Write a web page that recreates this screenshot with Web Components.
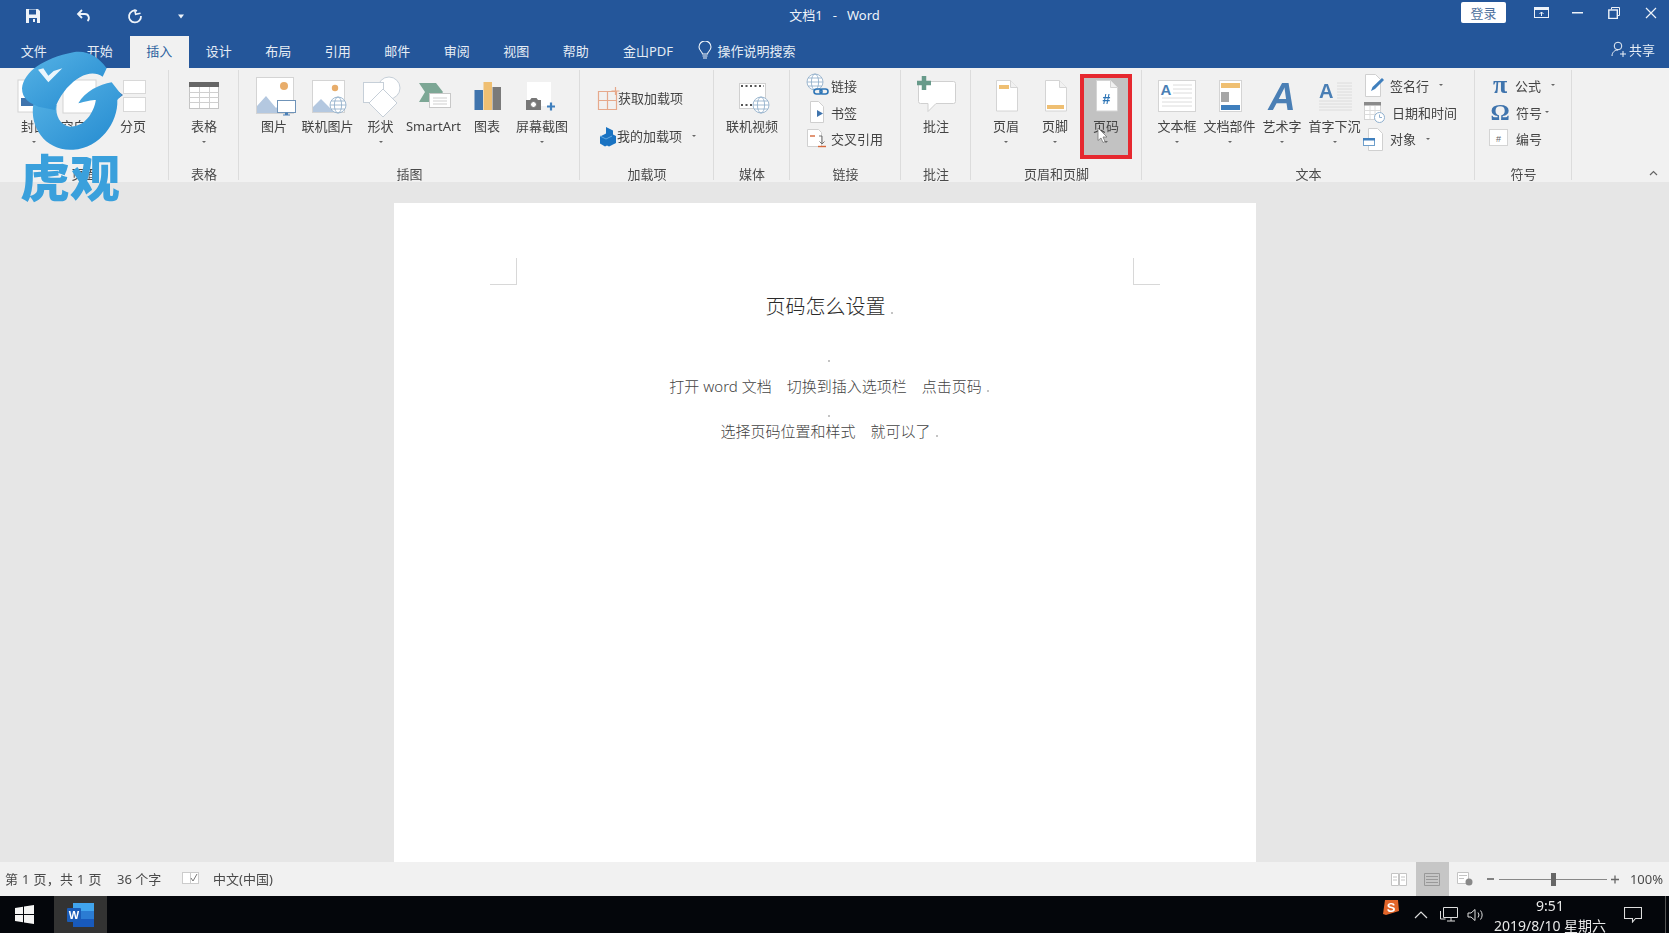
<!DOCTYPE html>
<html lang="zh">
<head>
<meta charset="utf-8">
<title>文档1 - Word</title>
<style>
  html, body { margin: 0; height: 100%; overflow: hidden; }
  body { font-family: "Noto Sans", "Noto Sans CJK SC", sans-serif; }
</style>
</head>
<body>
<word-window>
  <title-bar></title-bar>
  <tab-bar></tab-bar>
  <ribbon-bar>
    <ribbon-group label="页面" width="169" pad="8">
      <big-button icon="cover" label="封面" caret width="52"></big-button>
      <big-button icon="blank" label="空白页" width="40"></big-button>
      <big-button icon="pagebreak" label="分页" width="66"></big-button>
    </ribbon-group>
    <ribbon-group label="表格" width="70">
      <big-button icon="table" label="表格" caret width="70"></big-button>
    </ribbon-group>
    <ribbon-group label="插图" width="341" pad="8">
      <big-button icon="picture" label="图片" width="54"></big-button>
      <big-button icon="online" label="联机图片" width="53"></big-button>
      <big-button icon="shapes" label="形状" caret width="53"></big-button>
      <big-button icon="smartart" label="SmartArt" width="53"></big-button>
      <big-button icon="chart" label="图表" width="54"></big-button>
      <big-button icon="screenshot" label="屏幕截图" caret width="56"></big-button>
    </ribbon-group>
    <ribbon-group label="加载项" width="134" pad="15">
      <small-stack rows="38.5" top="10">
        <small-button icon="getaddin" label="获取加载项" box="23"></small-button>
        <small-button icon="myaddin" label="我的加载项" box="22" caret></small-button>
      </small-stack>
    </ribbon-group>
    <ribbon-group label="媒体" width="76">
      <big-button icon="video" label="联机视频" width="76"></big-button>
    </ribbon-group>
    <ribbon-group label="链接" width="111" pad="15">
      <small-stack rows="26.8" top="4">
        <small-button icon="link" label="链接" box="26"></small-button>
        <small-button icon="bookmark" label="书签" box="26"></small-button>
        <small-button icon="crossref" label="交叉引用" box="26"></small-button>
      </small-stack>
    </ribbon-group>
    <ribbon-group label="批注" width="70">
      <big-button icon="comment" label="批注" width="70"></big-button>
    </ribbon-group>
    <ribbon-group label="页眉和页脚" width="171" pad="11">
      <big-button icon="header" label="页眉" caret width="48"></big-button>
      <big-button icon="footer" label="页脚" caret width="50"></big-button>
      <big-button icon="pagenum" label="页码" caret width="52" active></big-button>
    </ribbon-group>
    <ribbon-group label="文本" width="333" pad="10">
      <big-button icon="textbox" label="文本框" caret width="50"></big-button>
      <big-button icon="parts" label="文档部件" caret width="55"></big-button>
      <big-button icon="wordart" label="艺术字" caret width="50"></big-button>
      <big-button icon="dropcap" label="首字下沉" caret width="55"></big-button>
      <small-stack rows="26.8" top="4">
        <small-button icon="signature" label="签名行" box="28" caret></small-button>
        <small-button icon="datetime" label="日期和时间" box="30"></small-button>
        <small-button icon="object" label="对象" box="28" caret></small-button>
      </small-stack>
    </ribbon-group>
    <ribbon-group label="符号" width="97" pad="12">
      <small-stack rows="26.8" top="4">
        <small-button glyph="π" size="26" label="公式" box="28" caret></small-button>
        <small-button glyph="Ω" size="24" label="符号" box="29" caret="3"></small-button>
        <small-button icon="number" label="编号" box="29"></small-button>
      </small-stack>
    </ribbon-group>
  </ribbon-bar>
  <doc-area></doc-area>
  <status-bar></status-bar>
  <task-bar></task-bar>
  <logo-mark></logo-mark>
</word-window>

<script>
const pageShape = (extra) => `<path d="M14.5 6.5h14l7 7v23.500h-21z" fill="#fff" stroke="#d4d4d4"/><path d="M28.500 6.500v7h7" fill="#f1f1f1" stroke="#d4d4d4"/>${extra}`;

const globe = (cx, cy, r) => `<g fill="#fff" stroke="#8aa9c6" stroke-width=".8"><circle cx="${cx}" cy="${cy}" r="${r}"/><ellipse cx="${cx}" cy="${cy}" rx="${r * 0.45}" ry="${r}" fill="none"/><path d="M${cx - r} ${cy}h${r * 2}M${cx - r * 0.85} ${cy - r * 0.5}h${r * 1.7}M${cx - r * 0.85} ${cy + r * 0.5}h${r * 1.7}" fill="none"/></g>`;

const BIG_ICONS = {
  cover: `<rect x="8" y="6" width="26" height="32" fill="#fff" stroke="#d4d4d4"/><rect x="11" y="24" width="20" height="8" fill="#3f74ad"/>`,
  blank: `<rect x="7" y="6" width="33" height="33" fill="#fff" stroke="#d4d4d4"/>`,
  pagebreak: `<rect x="14.500" y="6.500" width="22" height="13" fill="#fff" stroke="#d8d8d8"/><rect x="14.500" y="23.500" width="22" height="14" fill="#fff" stroke="#d8d8d8"/><path d="M10 18l4 3-4 3z" fill="#3f74ad"/>`,
  table: `<rect x="9.500" y="8.500" width="29" height="26" fill="#fff" stroke="#c4c4c4"/><rect x="9" y="8" width="30" height="5" fill="#666"/><path d="M9.500 18.500h29M9.500 23.500h29M9.500 28.500h29M19.500 13v21M29.500 13v21" stroke="#cfcfcf" fill="none"/>`,
  picture: `<rect x="6.500" y="3.500" width="37" height="36" fill="#fff" stroke="#d4d4d4"/><circle cx="34" cy="12" r="4" fill="#e8ad6b"/><path d="M7 39v-7l9-10 10 12 3-3 8 8z" fill="#b4c8e0"/><rect x="27.500" y="26.500" width="18" height="12" fill="#fff" stroke="#6f93b8"/><path d="M35 38.500h3v2h2v1h-7v-1h2z" fill="#4a7fb5"/>`,
  online: `<rect x="8.500" y="6.500" width="32" height="32" fill="#fff" stroke="#d4d4d4"/><circle cx="31" cy="14" r="3.200" fill="#e8ad6b"/><path d="M9 38v-5l8-8 9 9 4 4z" fill="#b4c8e0"/>${globe(34, 31, 8)}`,
  shapes: `<circle cx="32" cy="14" r="11" fill="#fff" stroke="#c6cfd8"/><rect x="6.500" y="8.500" width="20" height="20" fill="#fff" stroke="#c6cfd8"/><path d="M26 15l14 14-14 14-14-14z" fill="#fff" stroke="#c6cfd8"/>`,
  smartart: `<path d="M9 9h17l7 9-7 10H9l6-10z" fill="#7da795"/><rect x="19.500" y="19.500" width="21" height="14" fill="#fff" stroke="#c8c8c8"/><path d="M23 24h14M23 27h14M23 30h14" stroke="#cfcfcf" fill="none"/>`,
  chart: `<rect x="11.500" y="16" width="8.500" height="20" fill="#3f74ad"/><rect x="20.500" y="8" width="8.500" height="28" fill="#efbf72"/><rect x="29.500" y="13" width="8.500" height="23" fill="#7a7a7a"/>`,
  screenshot: `<rect x="9" y="8" width="24" height="24" fill="#fff"/><path d="M8 26h4l1.500-2h5l1.500 2h3v10H8z" fill="#777"/><circle cx="15.500" cy="30.500" r="3" fill="#fff" stroke="#777"/><path d="M33 28.500v8M29 32.500h8" stroke="#3f7fbd" stroke-width="2.200" fill="none"/>`,
  video: `<rect x="11.500" y="9.500" width="26" height="25" fill="#fff" stroke="#d0d0d0"/><path d="M13 12h23M13 31h14" stroke="#555" stroke-width="1.800" stroke-dasharray="2 2.500" fill="none"/>${globe(33, 31, 8)}`,
  comment: `<path d="M8.500 7.500h33q2 0 2 2v18q0 2-2 2H24l-8 8v-8H8.500q-2 0-2-2v-18q0-2 2-2z" fill="#fff" stroke="#d0d0d0"/><path d="M12 2v14M5 9h14" stroke="#679a8a" stroke-width="4.500" fill="none"/>`,
  header: pageShape(`<rect x="17" y="11" width="10" height="4" fill="#efbf72"/>`),
  footer: pageShape(`<rect x="16" y="31" width="17" height="4" fill="#efbf72"/>`),
  pagenum: pageShape(`<text x="24.500" y="30" text-anchor="middle" font-family="Liberation Sans" font-weight="700" font-size="14" fill="#2e75b6">#</text>`),
  textbox: `<rect x="5.500" y="6.500" width="37" height="31" fill="#fff" stroke="#d4d4d4"/><text x="7.500" y="21" font-family="Liberation Sans" font-weight="700" font-size="15" fill="#4a7fb5">A</text><path d="M20 11h19M20 15h19M20 19h19M9 24h30M9 28h30M9 32h30" stroke="#dcdcdc" fill="none"/>`,
  parts: `<rect x="13.500" y="6.500" width="22" height="31" fill="#fff" stroke="#d4d4d4"/><rect x="15" y="9" width="19" height="5" fill="#efbf72"/><rect x="15" y="18" width="8" height="10" fill="#a6a6a6"/><rect x="15" y="31" width="19" height="5" fill="#3f7fbd"/>`,
  wordart: `<text x="24" y="36" text-anchor="middle" font-family="Liberation Sans" font-weight="700" font-style="italic" font-size="38" fill="#4a7fb5">A</text>`,
  dropcap: `<path d="M26 9h15M26 12h15M26 15h15M26 18h15M26 21h15M26 24h15M8 27h33M8 30h33M8 33h33M8 36h33" stroke="#dcdcdc" fill="none"/><text x="8" y="24" font-family="Liberation Sans" font-weight="700" font-size="20" fill="#4a7fb5">A</text>`
};

const SMALL_ICONS = {
  getaddin: `<path d="M3.500 7.500h18v18h-18zM12.500 7.500v18M3.500 16.500h18" fill="none" stroke="#e6a98c" stroke-width="1.200"/><path d="M20.500 3v8M16.500 7h8" stroke="#e6a98c" stroke-width="1.200" fill="none"/>`,
  myaddin: `<path d="M11 4l7 3.500v4l3 1.500v7l-7 3.500-2-1-2 1-5-3v-7l6-3z" fill="#1a73c2"/><path d="M5 13l6 3 6-3" stroke="#62a7e0" fill="none"/>`,
  link: `${globe(10, 10, 8)}<rect x="9" y="17" width="8" height="5" rx="2.500" fill="none" stroke="#2e75b6" stroke-width="1.600"/><rect x="15" y="17" width="8" height="5" rx="2.500" fill="none" stroke="#2e75b6" stroke-width="1.600"/>`,
  bookmark: `<path d="M5.500 2.500h8l5 5v16h-13z" fill="#fff" stroke="#cfcfcf"/><path d="M12 11l6 3.500-6 3.500z" fill="#3f74ad"/>`,
  crossref: `<path d="M2.500 3.500h11l3 3v14h-14z" fill="#fff" stroke="#d0d0d0"/><path d="M5 10h5" stroke="#d6683a" stroke-width="1.400" fill="none"/><path d="M14 10h3v7M14.500 15.500l2.500 2.500 2.500-2.500" stroke="#666" stroke-width=".9" fill="none"/><path d="M13 20.500h8" stroke="#d6683a" stroke-width="1.400" fill="none"/>`,
  signature: `<path d="M3.500 2.500h10l5 5v17h-15z" fill="#fff" stroke="#d0d0d0"/><path d="M9 19l1.500-4L20 6l2 2-9 9z" fill="#3f7fbd"/>`,
  datetime: `<rect x="2.500" y="3.500" width="16" height="17" fill="#fff" stroke="#d4d4d4"/><rect x="2" y="3" width="17" height="3.500" fill="#8a8a8a"/><path d="M2.500 11.500h16M2.500 15.500h16M8 7v13M13 7v13" stroke="#dcdcdc" fill="none"/><circle cx="17.500" cy="18.500" r="5" fill="#fff" stroke="#8fb0cf"/><path d="M17.500 15.500v3h2.500" stroke="#8fb0cf" fill="none"/>`,
  object: `<path d="M6.500 2.500h9l5 5v17h-14z" fill="#fff" stroke="#d0d0d0"/><rect x="1.500" y="12.500" width="11" height="7" fill="#fff" stroke="#6f9fcb"/><rect x="1" y="12" width="12" height="2.500" fill="#3f7fbd"/>`,
  number: `<rect x="2.500" y="3.500" width="18" height="16" fill="#fff" stroke="#d4d4d4"/><text x="11.500" y="16" text-anchor="middle" font-family="Liberation Sans" font-size="9" fill="#666">#</text>`
};

class WordWindow extends HTMLElement {
  constructor() {
    super();
    this.attachShadow({ mode: "open" });
    this.shadowRoot.innerHTML = `
      <style>
        :host {
          display: grid;
          grid-template-rows: 34px 34px 114px 680px 34px 37px;
          position: relative;
          width: 1669px;
          height: 933px;
          overflow: hidden;
          font-family: "Noto Sans", "Noto Sans CJK SC", sans-serif;
          filter: blur(.35px);
        }
      </style>
      <slot></slot>
    `;
  }
}

class TitleBar extends HTMLElement {
  constructor() {
    super();
    this.attachShadow({ mode: "open" });
    this.shadowRoot.innerHTML = `
      <style>
        :host {
          display: grid;
          grid-template-columns: 1fr auto 1fr;
          align-items: center;
          box-sizing: border-box;
          padding-bottom: 2px;
          background: #24569a;
          color: #eef3f9;
          font-size: 13px;
        }
        .qat { display: flex; padding-left: 7px; }
        .qat span { width: 51px; display: flex; justify-content: center; align-items: center; }
        .qat span:last-child { width: 41px; }
        .qat svg { display: block; }
        .title { white-space: pre; margin-bottom: 4px; }
        .ctl { display: flex; justify-content: flex-end; align-items: center; margin-top: 2px; }
        .login {
          width: 45px;
          height: 21px;
          margin-right: 17px;
          margin-top: -9px;
          background: #fff;
          color: #4d6f9c;
          border-radius: 2px;
          display: flex;
          align-items: center;
          justify-content: center;
        }
        .win { width: 36.500px; height: 26px; margin-top: -9px; display: flex; align-items: center; justify-content: center; }
      </style>
      <div class="qat">
        <span><svg width="16" height="16" viewBox="0 0 16 16"><path d="M1 1h12l2 2v12H1z" fill="#eef3f9"/><rect x="4" y="1.500" width="7" height="5" fill="#24569a"/><rect x="4" y="10" width="8" height="5" fill="#24569a"/><rect x="8" y="11" width="2" height="3" fill="#eef3f9"/></svg></span>
        <span><svg width="16" height="16" viewBox="0 0 16 16"><path d="M6 2L2 6l4 4M2.500 6H9a4 4 0 0 1 2.500 7" fill="none" stroke="#eef3f9" stroke-width="1.800"/></svg></span>
        <span><svg width="16" height="16" viewBox="0 0 16 16"><path d="M10 2.800A6 6 0 1 0 14 8" fill="none" stroke="#eef3f9" stroke-width="1.800"/><path d="M8 1v5h5" fill="none" stroke="#eef3f9" stroke-width="1.600" transform="rotate(-12 10 3)"/></svg></span>
        <span><svg width="8" height="8" viewBox="0 0 8 8"><path d="M1 2.500h6L4 6.500z" fill="#eef3f9"/></svg></span>
      </div>
      <div class="title">文档1   -   Word</div>
      <div class="ctl">
        <div class="login">登录</div>
        <div class="win"><svg width="15" height="12" viewBox="0 0 15 12"><rect x=".5" y=".5" width="14" height="10" fill="none" stroke="#eef3f9"/><rect x="1" y="1" width="13" height="2" fill="#eef3f9"/><path d="M7.500 9V5M5.500 7l2-2 2 2" stroke="#eef3f9" fill="none"/></svg></div>
        <div class="win"><svg width="11" height="2" viewBox="0 0 11 2"><rect width="11" height="1.500" fill="#eef3f9"/></svg></div>
        <div class="win"><svg width="12" height="12" viewBox="0 0 12 12"><path d="M3.500 2.500v-2h8v8h-2" fill="none" stroke="#eef3f9"/><rect x=".8" y="3" width="8.500" height="8.500" fill="none" stroke="#eef3f9" stroke-width="1.400"/></svg></div>
        <div class="win" style="margin-right: 0"><svg width="12" height="12" viewBox="0 0 12 12"><path d="M1 1l10 10M11 1L1 11" stroke="#eef3f9" stroke-width="1.200"/></svg></div>
      </div>
    `;
  }
}

class TabBar extends HTMLElement {
  constructor() {
    super();
    this.attachShadow({ mode: "open" });
    const tabs = ["文件", "开始", "插入", "设计", "布局", "引用", "邮件", "审阅", "视图", "帮助"];
    this.shadowRoot.innerHTML = `
      <style>
        :host {
          display: flex;
          align-items: stretch;
          background: #24569a;
          color: #e6edf5;
          font-size: 13px;
          padding: 2px 0 0 4px;
          box-sizing: border-box;
        }
        .tab { width: 59.500px; display: flex; align-items: center; justify-content: center; padding-bottom: 3px; box-sizing: border-box; }
        .tab:first-of-type { margin-right: 6.500px; }
        .tab.active { background: #f1f1f1; color: #2b5f9e; }
        .pdf { width: 85px; }
        .search { display: flex; align-items: center; gap: 6px; margin-left: 7px; padding-bottom: 3px; }
        .share { margin-left: auto; display: flex; align-items: center; gap: 2px; padding: 0 14px 6px 0; }
      </style>
      ${tabs
        .map((t) => `<div class="tab${t === "插入" ? " active" : ""}">${t}</div>`)
        .join("")}
      <div class="tab pdf">金山PDF</div>
      <div class="search">
        <svg width="14" height="19" viewBox="0 0 14 19"><path d="M4.500 13c0-2-3.500-3.500-3.500-7a6 6 0 0 1 12 0c0 3.500-3.500 5-3.500 7z" fill="none" stroke="#eef3f9" stroke-width="1.100"/><path d="M4.500 15h5M5 17h4" stroke="#eef3f9"/></svg>
        <span>操作说明搜索</span>
      </div>
      <div class="share">
        <svg width="16" height="17" viewBox="0 0 16 17"><circle cx="7" cy="5" r="3.800" fill="none" stroke="#eef3f9"/><path d="M1 15c0-3.500 2.500-6 6-6" fill="none" stroke="#eef3f9"/><path d="M12 10v6M9 13h6" stroke="#eef3f9"/></svg>
        <span>共享</span>
      </div>
    `;
  }
}

class RibbonBar extends HTMLElement {
  constructor() {
    super();
    this.attachShadow({ mode: "open" });
    this.shadowRoot.innerHTML = `
      <style>
        :host {
          display: flex;
          position: relative;
          background: #f1f1f1;
          color: #444;
          font-size: 13px;
        }
        .collapse { position: absolute; right: 11px; bottom: 6px; }
      </style>
      <slot></slot>
      <svg class="collapse" width="9" height="6" viewBox="0 0 9 6"><path d="M1 5l3.500-3.500L8 5" fill="none" stroke="#666" stroke-width="1.200"/></svg>
    `;
  }
}

class RibbonGroup extends HTMLElement {
  constructor() {
    super();
    this.attachShadow({ mode: "open" });
  }

  connectedCallback() {
    this.shadowRoot.innerHTML = `
      <style>
        :host {
          display: flex;
          flex-direction: column;
          flex: none;
          box-sizing: border-box;
          width: ${this.getAttribute("width")}px;
          position: relative;
        }
        :host::after {
          content: "";
          position: absolute;
          right: 0;
          top: 2px;
          bottom: 2px;
          width: 1px;
          background: #dcdcdc;
        }
        .items { flex: 1; display: flex; padding-left: ${this.getAttribute("pad") || 0}px; }
        .label { height: 18px; line-height: 20px; text-align: center; color: #4a4a4a; }
      </style>
      <div class="items"><slot></slot></div>
      <div class="label">${this.getAttribute("label")}</div>
    `;
  }
}

class BigButton extends HTMLElement {
  constructor() {
    super();
    this.attachShadow({ mode: "open" });
  }

  connectedCallback() {
    const active = this.hasAttribute("active");
    this.shadowRoot.innerHTML = `
      <style>
        :host {
          display: flex;
          flex-direction: column;
          align-items: center;
          flex: none;
          box-sizing: border-box;
          position: relative;
          width: ${this.getAttribute("width")}px;
          padding-top: 6px;
          height: 96px;
          white-space: nowrap;
        }
        .hot {
          position: absolute;
          left: 0;
          right: 0;
          top: 6px;
          height: 85px;
          box-sizing: border-box;
          background: #c2c2c2;
          border: 4px solid #e6282f;
        }
        svg.icon { position: relative; display: block; }
        .label { position: relative; height: 16px; line-height: 16px; color: #444; }
        .caret {
          position: relative;
          width: 0;
          height: 0;
          margin-top: 7px;
          border: 2px solid transparent;
          border-top: 2.500px solid #666;
          border-bottom: 0;
        }
        .cursor { position: absolute; left: 17px; top: 59px; }
      </style>
      ${active ? '<div class="hot"></div>' : ""}
      <svg class="icon" width="48" height="44" viewBox="0 0 48 44">${BIG_ICONS[this.getAttribute("icon")]}</svg>
      <div class="label">${this.getAttribute("label")}</div>
      ${this.hasAttribute("caret") ? '<div class="caret"></div>' : ""}
      ${
        active
          ? `<svg class="cursor" width="13" height="17" viewBox="0 0 13 17"><path d="M1 1v12.500l3-2.500 2 4.500 2-1-2-4.500h4z" fill="#fff" stroke="#777" stroke-width=".8"/></svg>`
          : ""
      }
    `;
  }
}

class SmallStack extends HTMLElement {
  constructor() {
    super();
    this.attachShadow({ mode: "open" });
  }

  connectedCallback() {
    this.shadowRoot.innerHTML = `
      <style>
        :host {
          display: grid;
          grid-auto-rows: ${this.getAttribute("rows")}px;
          align-content: start;
          padding-top: ${this.getAttribute("top")}px;
        }
      </style>
      <slot></slot>
    `;
  }
}

class SmallButton extends HTMLElement {
  constructor() {
    super();
    this.attachShadow({ mode: "open" });
  }

  connectedCallback() {
    const caret = this.getAttribute("caret");
    const glyph = this.getAttribute("glyph");
    this.shadowRoot.innerHTML = `
      <style>
        :host {
          display: flex;
          align-items: center;
          white-space: nowrap;
          color: #444;
        }
        .box { width: ${this.getAttribute("box")}px; flex: none; display: flex; align-items: center; justify-content: flex-start; }
        svg { display: block; flex: none; }
        .glyph {
          width: 26px;
          text-align: center;
          font-family: "Liberation Serif", serif;
          font-weight: 700;
          font-size: ${this.getAttribute("size")}px;
          line-height: 26px;
          color: #3f74ad;
        }
        .caret {
          width: 0;
          height: 0;
          margin-left: ${caret ? caret : 10}px;
          border: 2px solid transparent;
          border-top: 2.500px solid #666;
          border-bottom: 0;
        }
      </style>
      <div class="box">${
        glyph
          ? `<span class="glyph">${glyph}</span>`
          : `<svg width="26" height="26" viewBox="0 0 26 26">${SMALL_ICONS[this.getAttribute("icon")]}</svg>`
      }</div>
      <span>${this.getAttribute("label")}</span>
      ${caret !== null ? '<div class="caret"></div>' : ""}
    `;
  }
}

class DocArea extends HTMLElement {
  constructor() {
    super();
    this.attachShadow({ mode: "open" });
    this.shadowRoot.innerHTML = `
      <style>
        :host {
          display: flex;
          justify-content: center;
          align-items: flex-start;
          background: #e6e6e6;
          padding: 21px 19px 0 0;
          overflow: hidden;
          box-sizing: border-box;
        }
        .page {
          position: relative;
          box-sizing: border-box;
          width: 862px;
          height: 659px;
          background: #fff;
          padding: 91px 0 0 8px;
          text-align: center;
          color: #444;
          font-weight: 300;
          font-size: 15px;
        }
        .crop { position: absolute; top: 55px; width: 26px; height: 26px; border-bottom: 1px solid #d8d8d8; }
        .crop.l { left: 96px; border-right: 1px solid #d8d8d8; }
        .crop.r { left: 739px; border-left: 1px solid #d8d8d8; }
        p { margin: 0; line-height: 20px; white-space: pre; }
        .h1 { font-size: 20px; line-height: 26px; color: #2a2a2a; }
        .mark { display: inline-block; width: 2px; height: 2px; margin-left: 5px; background: #c4c4c4; vertical-align: baseline; }
        .empty .mark { margin: 0; }
      </style>
      <div class="page">
        <div class="crop l"></div>
        <div class="crop r"></div>
        <p class="h1">页码怎么设置<span class="mark"></span></p>
        <p class="empty" style="margin-top: 26px"><span class="mark"></span></p>
        <p style="margin-top: 10px">打开 word 文档&emsp;切换到插入选项栏&emsp;点击页码<span class="mark"></span></p>
        <p class="empty" style="margin-top: 5px"><span class="mark"></span></p>
        <p>选择页码位置和样式&emsp;就可以了<span class="mark"></span></p>
      </div>
    `;
  }
}

class StatusBar extends HTMLElement {
  constructor() {
    super();
    this.attachShadow({ mode: "open" });
    this.shadowRoot.innerHTML = `
      <style>
        :host {
          display: flex;
          align-items: stretch;
          background: #f1f1f1;
          color: #4a4a4a;
          font-size: 13px;
          white-space: pre;
        }
        .item { display: flex; align-items: center; padding-bottom: 1px; }
        .view { width: 33px; display: flex; align-items: center; justify-content: center; }
        .view.on { background: #c6c6c6; }
        .zoom { display: flex; align-items: center; gap: 0; }
        .track { position: relative; width: 108px; height: 1px; background: #888; margin: 0 4px; }
        .thumb { position: absolute; left: 52px; top: -6px; width: 5px; height: 13px; background: #666; }
      </style>
      <div class="item" style="margin-left: 5px; width: 112px; letter-spacing: .3px">第 1 页，共 1 页</div>
      <div class="item" style="width: 65px">36 个字</div>
      <div class="item" style="width: 31px"><svg width="17" height="13" viewBox="0 0 17 13"><rect x=".5" y=".5" width="8" height="11" fill="#fff" stroke="#ccc"/><rect x="8.500" y=".5" width="8" height="11" fill="#fff" stroke="#ccc"/><path d="M9 6l2 3 4-7" fill="none" stroke="#777"/></svg></div>
      <div class="item">中文(中国)</div>
      <div style="flex: 1"></div>
      <div class="view"><svg width="16" height="13" viewBox="0 0 16 13"><path d="M.5.5h7v12h-7zM8.500.5h7v12h-7zM2 4h4M2 7h4M10 4h4M10 7h4" fill="#fff" stroke="#c4c4c4"/></svg></div>
      <div class="view on"><svg width="16" height="13" viewBox="0 0 16 13"><path d="M.5.5h15v12H.5zM2 3.500h12M2 6.500h12M2 9.500h12" fill="none" stroke="#999"/></svg></div>
      <div class="view"><svg width="16" height="14" viewBox="0 0 16 14"><path d="M.5.5h11v11H.5zM2 3.500h8M2 6.500h5" fill="#fff" stroke="#c4c4c4"/><circle cx="12" cy="10" r="3.500" fill="#888"/></svg></div>
      <div class="zoom" style="margin-left: 5px">
        <svg width="8" height="8" viewBox="0 0 8 8"><path d="M0 4h7" stroke="#666" stroke-width="1.600"/></svg>
        <div class="track"><div class="thumb"></div></div>
        <svg width="9" height="9" viewBox="0 0 9 9"><path d="M0 4.500h8M4 .5v8" stroke="#666" stroke-width="1.300"/></svg>
      </div>
      <div class="item" style="margin-left: 10px; margin-right: 6px">100%</div>
    `;
  }
}

class TaskBar extends HTMLElement {
  constructor() {
    super();
    this.attachShadow({ mode: "open" });
    this.shadowRoot.innerHTML = `
      <style>
        :host {
          display: flex;
          align-items: stretch;
          background: #04060b;
          color: #e8e8e8;
          font-size: 14px;
        }
        .start { width: 54px; display: flex; align-items: center; justify-content: center; padding-right: 6px; box-sizing: border-box; }
        .word { width: 53px; background: #333; display: flex; align-items: center; justify-content: center; }
        .tray { margin-left: auto; display: flex; align-items: center; position: relative; padding-right: 27px; }
        .tray > svg { display: block; }
        .sogou { position: absolute; left: -32px; top: 3px; }
        .clock { width: 112px; height: 37px; margin-left: 9px; display: flex; flex-direction: column; align-items: center; line-height: 20px; white-space: nowrap; }
        .edge { position: absolute; right: 3px; top: 0; bottom: 0; width: 1px; background: #555; }
      </style>
      <div class="start">
        <svg width="19" height="19" viewBox="0 0 19 19"><path d="M0 3l8-1.200v7.200H0zM9 1.600L19 0v9H9zM0 10h8v7.200L0 16zM9 10h10v9L9 17.400z" fill="#f4f4f4"/></svg>
      </div>
      <div class="word">
        <svg width="27" height="24" viewBox="0 0 27 24"><rect x="6" y="0" width="21" height="8" fill="#41a5ee"/><rect x="6" y="8" width="21" height="8" fill="#2b7cd3"/><rect x="6" y="16" width="21" height="8" fill="#185abd"/><rect x="0" y="5" width="14" height="14" rx="1" fill="#1a5cb8"/><text x="7" y="16" text-anchor="middle" font-family="Liberation Sans" font-weight="700" font-size="11" fill="#fff">W</text></svg>
      </div>
      <div class="tray">
        <svg class="sogou" width="18" height="17" viewBox="0 0 18 17"><path d="M3 1h13l1 11-13 4-3-1z" fill="#e2652a"/><text x="9" y="13" text-anchor="middle" font-family="Liberation Sans" font-weight="700" font-size="13" fill="#fff">S</text></svg>
        <svg width="14" height="8" viewBox="0 0 14 8" style="margin-right: 12px"><path d="M1 7l6-6 6 6" fill="none" stroke="#ddd" stroke-width="1.200"/></svg>
        <svg width="18" height="15" viewBox="0 0 18 15" style="margin-right: 9px"><path d="M3.500.5h14v10h-14zM7 14h8M11 10.500V14M.5 4v8h5" fill="none" stroke="#ddd"/></svg>
        <svg width="18" height="14" viewBox="0 0 18 14"><path d="M1 5h3l4-3.500v11L4 9H1zM11 4.500a4 4 0 0 1 0 5M13.500 2.500a7 7 0 0 1 0 9" fill="none" stroke="#ddd"/></svg>
        <div class="clock"><div>9:51</div><div>2019/8/10 星期六</div></div>
        <svg width="18" height="16" viewBox="0 0 18 16" style="margin-left: 18px"><path d="M.5.5h17v11h-6l-3 3.500v-3.500h-8z" fill="none" stroke="#ddd" stroke-width="1.100"/></svg>
        <div class="edge"></div>
      </div>
    `;
  }
}

class LogoMark extends HTMLElement {
  constructor() {
    super();
    this.attachShadow({ mode: "open" });
    this.shadowRoot.innerHTML = `
      <style>
        :host { position: absolute; left: 10px; top: 45px; width: 150px; height: 165px; }
        svg { position: absolute; left: 0; top: 0; }
        .name {
          position: absolute;
          left: 10px;
          top: 100px;
          font-family: "Noto Sans CJK SC", sans-serif;
          font-weight: 900;
          font-size: 50px;
          line-height: 60px;
          color: #3aa0dc;
          white-space: nowrap;
        }
      </style>
      <svg width="150" height="110" viewBox="0 0 450 330">
        <defs>
          <linearGradient id="a" x1="0" y1="0" x2="1" y2="1"><stop offset="0" stop-color="#58b4e6"/><stop offset="1" stop-color="#2289cf"/></linearGradient>
        </defs>
        <path d="M335 150L305 112C268 118 225 140 205 175C225 170 245 165 258 165C250 205 225 245 180 245C150 240 135 212 140 180L70 178C58 250 110 320 190 314C270 310 325 232 322 165Z" fill="url(#a)"/>
        <path d="M36 130C42 80 100 40 190 22C232 15 265 35 290 70L278 95C250 75 210 85 170 130C155 150 140 170 135 195L85 185C60 175 36 162 36 130Z" fill="url(#a)"/>
        <path d="M84 74L115 112L157 70L131 78L115 92L100 70Z" fill="#eaf5fc"/>
      </svg>
      <div class="name">虎观</div>
    `;
  }
}

customElements.define("word-window", WordWindow);
customElements.define("title-bar", TitleBar);
customElements.define("tab-bar", TabBar);
customElements.define("ribbon-bar", RibbonBar);
customElements.define("ribbon-group", RibbonGroup);
customElements.define("big-button", BigButton);
customElements.define("small-stack", SmallStack);
customElements.define("small-button", SmallButton);
customElements.define("doc-area", DocArea);
customElements.define("status-bar", StatusBar);
customElements.define("task-bar", TaskBar);
customElements.define("logo-mark", LogoMark);
</script>
</body>
</html>
